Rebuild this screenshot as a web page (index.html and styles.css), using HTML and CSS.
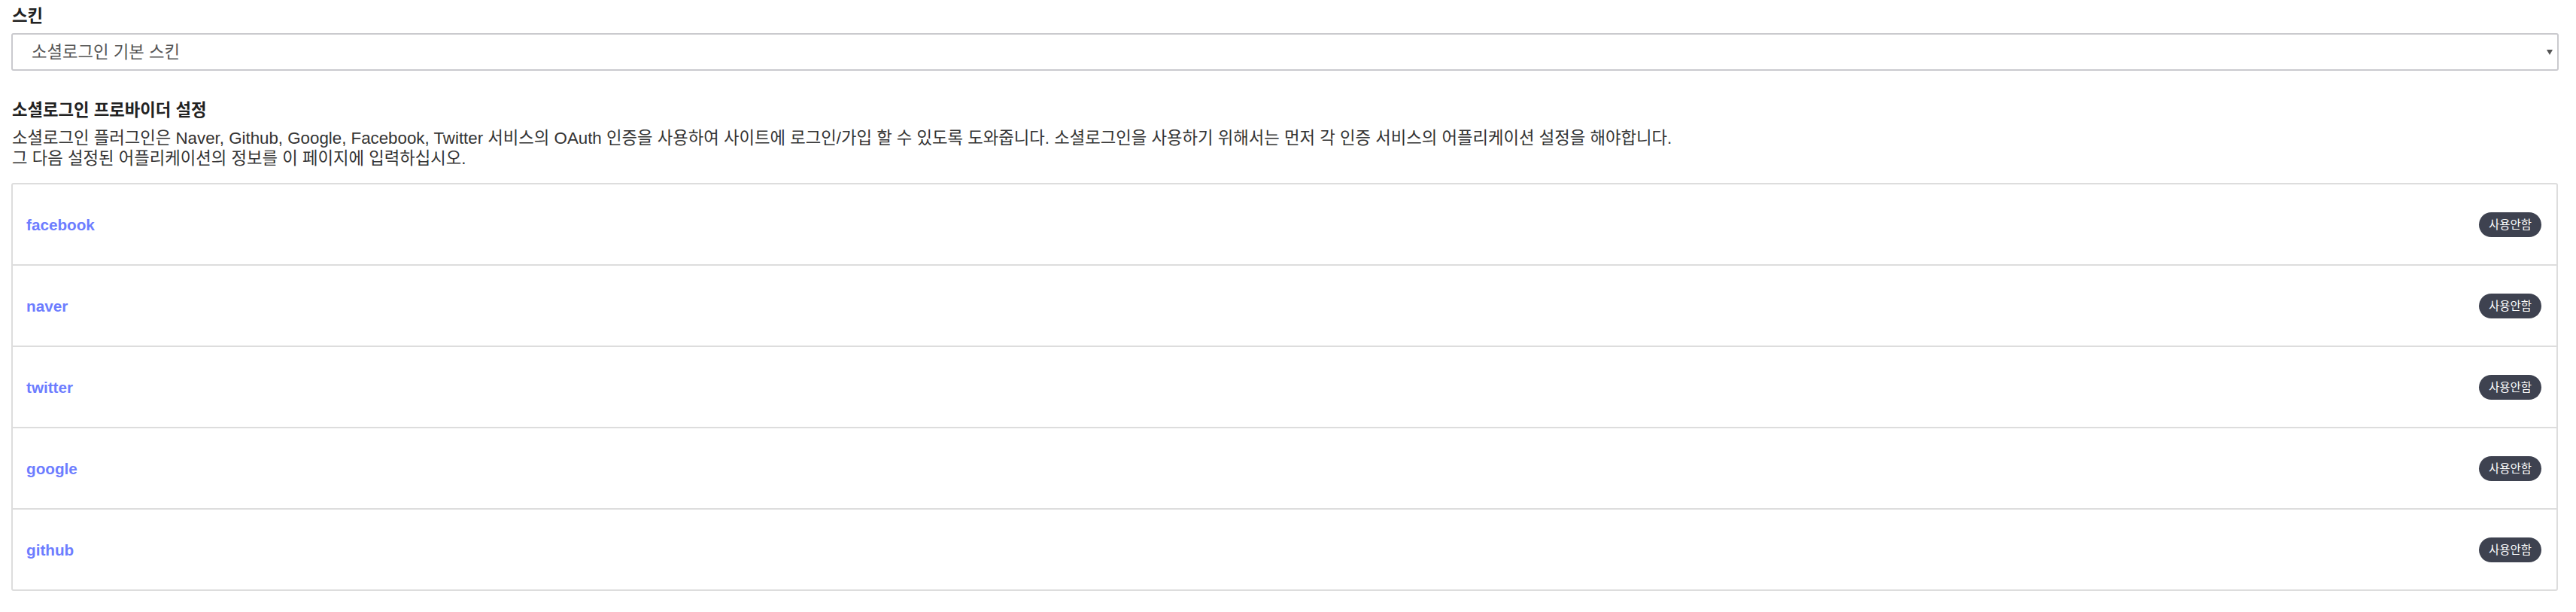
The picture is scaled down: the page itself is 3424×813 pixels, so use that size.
FILE: index.html
```html
<!DOCTYPE html>
<html lang="ko">
<head>
<meta charset="utf-8">
<title>소셜로그인 설정</title>
<link rel="stylesheet" href="styles.css">
</head>
<body>
<div class="page">
  <div class="field">
    <label class="field-label" for="skin">스킨</label>
    <div class="select-wrap">
      <select id="skin" class="select">
        <option>소셜로그인 기본 스킨</option>
      </select>
    </div>
  </div>

  <section class="providers">
    <h2 class="section-title">소셜로그인 프로바이더 설정</h2>
    <p class="desc">소셜로그인 플러그인은 Naver, Github, Google, Facebook, Twitter 서비스의 OAuth 인증을 사용하여 사이트에 로그인/가입 할 수 있도록 도와줍니다. 소셜로그인을 사용하기 위해서는 먼저 각 인증 서비스의 어플리케이션 설정을 해야합니다.<br>그 다음 설정된 어플리케이션의 정보를 이 페이지에 입력하십시오.</p>
    <ul class="provider-list">
      <li class="provider"><a class="provider-name" href="#">facebook</a><span class="badge">사용안함</span></li>
      <li class="provider"><a class="provider-name" href="#">naver</a><span class="badge">사용안함</span></li>
      <li class="provider"><a class="provider-name" href="#">twitter</a><span class="badge">사용안함</span></li>
      <li class="provider"><a class="provider-name" href="#">google</a><span class="badge">사용안함</span></li>
      <li class="provider"><a class="provider-name" href="#">github</a><span class="badge">사용안함</span></li>
    </ul>
  </section>
</div>
</body>
</html>
```

FILE: styles.css
```css
* {
  box-sizing: border-box;
}

html, body {
  margin: 0;
  padding: 0;
  background: #ffffff;
}

body {
  font-family: "Liberation Sans", "Noto Sans CJK KR", sans-serif;
  font-size: 22.3px;
  line-height: 27px;
  color: #333333;
}

.page {
  padding: 8px 23px 0 15px;
}

.field {
  display: flex;
  flex-direction: column;
}

.field-label {
  display: block;
  padding-left: 1px;
  font-weight: bold;
  color: #222222;
}

.select-wrap {
  position: relative;
  margin-top: 9px;
}

.select-wrap::after {
  content: "";
  position: absolute;
  right: 8px;
  top: 22px;
  width: 0;
  height: 0;
  border-left: 4.5px solid transparent;
  border-right: 4.5px solid transparent;
  border-top: 7px solid #555555;
  pointer-events: none;
}

.select {
  -webkit-appearance: none;
  appearance: none;
  display: block;
  width: 100%;
  height: 50px;
  margin: 0;
  padding: 0 30px 0 25px;
  border: 2px solid #cacace;
  border-radius: 3px;
  background: #ffffff;
  font-family: "Liberation Sans", "Noto Sans CJK KR", sans-serif;
  font-size: 22.3px;
  color: #555555;
  outline: none;
}

.providers {
  margin-top: 39px;
}

.section-title {
  margin: 0;
  padding-left: 1px;
  font-size: 22.3px;
  line-height: 27px;
  font-weight: bold;
  color: #222222;
}

.desc {
  margin: 10px 0 0;
  padding-left: 1px;
  color: #333333;
}

.provider-list {
  list-style: none;
  margin: 19px 0 0;
  padding: 0;
  border: 2px solid #dddddd;
  border-radius: 3px;
  width: calc(100% - 1px);
}

.provider {
  display: flex;
  align-items: center;
  justify-content: space-between;
  height: 106px;
  padding: 0 20px 0 18px;
}

.provider + .provider {
  border-top: 2px solid #dddddd;
  height: 108px;
}

.provider-name {
  font-family: "Liberation Sans", sans-serif;
  font-size: 20.7px;
  font-weight: bold;
  color: #6d7dff;
  text-decoration: none;
}

.badge {
  display: inline-flex;
  align-items: center;
  justify-content: center;
  height: 33px;
  padding: 0 13px;
  border-radius: 17px;
  background: #3e4250;
  color: #ffffff;
  font-size: 15.5px;
  line-height: 1;
  font-family: "Noto Sans CJK KR", sans-serif;
}
```
